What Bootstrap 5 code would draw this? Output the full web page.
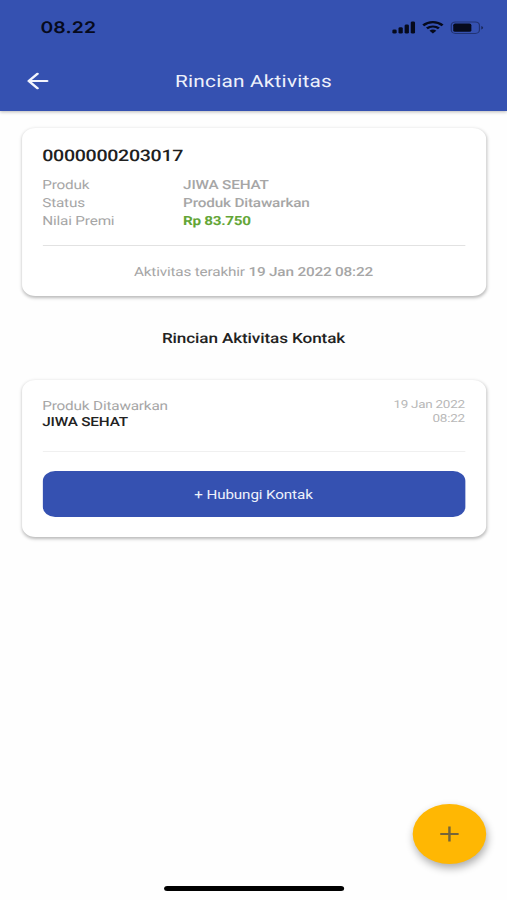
<!DOCTYPE html>
<html lang="id">
<head>
<meta charset="utf-8">
<meta name="viewport" content="width=device-width, initial-scale=1">
<title>Rincian Aktivitas</title>
<link href="https://cdn.jsdelivr.net/npm/bootstrap@5.3.0/dist/css/bootstrap.min.css" rel="stylesheet">
<style>
  html, body { height: 900px; overflow: hidden; background: #fefefe; }
  body { font-family: Roboto, "Liberation Sans", sans-serif; font-size: 12.5px; letter-spacing: -.15px; line-height: 18px; color: #a6a6a6; text-rendering: geometricPrecision; }
  /* 414px phone layout widened to fill the 507px window */
  .phone { width: 414px; height: 900px; transform: scaleX(1.22464); transform-origin: 0 0; background: #fefefe; }
  .app-head { height: 111px; background: #3551b1; box-shadow: 0 1px 3px rgba(0,0,0,.28); }
  .status-row { height: 54px; padding: 0 19px 0 33px; color: #060a1c; }
  .clock { font: 600 15.8px/20px Inter, sans-serif; letter-spacing: .15px; padding-top: 2px; }
  .title-row { height: 54px; }
  .back { left: 22px; top: 18px; line-height: 0; }
  .screen-title { font-size: 17px; line-height: 20px; letter-spacing: .17px; padding-top: 1px; color: #eef1fb; }
  .panel { margin: 0 17.5px; padding: 0 17px; border: 0; border-radius: 11px; background: #fff; color: inherit; box-shadow: 0 1.5px 3px rgba(0,0,0,.27); }
  .panel-a { margin-top: 17px; height: 168px; padding-top: 18px; }
  .panel-b { height: 157px; padding-top: 18px; }
  .ident { font-size: 16px; line-height: 20px; letter-spacing: -.25px; color: #202020; margin-bottom: 11px; }
  .key { width: 115px; }
  .medium { font-weight: 500; }
  .money { color: #64a637; font-weight: 700; letter-spacing: -.28px; }
  .rule { height: 1px; background: #e2e2e2; }
  .rule-a { margin-top: 14px; }
  .latest { margin-top: 18px; }
  .rule-soft { background: #f0f0f0; margin-top: 14px; }
  .section-title { font-size: 14px; line-height: 20px; letter-spacing: -.1px; color: #222; margin: 33px 0 31px; }
  .stamp { font-size: 11px; line-height: 14px; letter-spacing: -.22px; color: #b8b8b8; }
  .detail { height: 39px; padding-top: 1px; line-height: 16px; }
  .prod { color: #222; }
  .btn-contact { height: 46px; margin-top: 19px; border-radius: 10px; background: #3551b1; color: #eef1fb; font-size: 12.4px; letter-spacing: -.08px; line-height: 18px; padding: 1px 0 0; border: 0; }
  .btn-contact:hover { background: #2c459b; color: #fff; }
  .fab { right: 17px; bottom: 36px; width: 60px; height: 60px; background: #ffb703; box-shadow: 1px 4px 8px rgba(0,0,0,.33); }
  .home-bar { left: 134px; bottom: 9px; width: 147px; height: 5px; background: #000; }
</style>
</head>
<body>
<div class="phone position-relative">
  <header class="app-head">
    <div class="status-row d-flex align-items-center justify-content-between">
      <span class="clock">08.22</span>
      <svg width="76" height="16" viewBox="0 0 76 16" fill="currentColor" aria-label="Status">
        <rect x="1.4" y="10.4" width="3.5" height="4.2" rx="1.3"/>
        <rect x="6.4" y="8.2" width="3.5" height="6.4" rx="1.3"/>
        <rect x="11.4" y="5.4" width="3.5" height="9.2" rx="1.3"/>
        <rect x="16.4" y="2.4" width="3.5" height="12.2" rx="1.3"/>
        <g fill="none" stroke="currentColor" stroke-width="2.2">
          <path d="M26.6 6.4a11.2 11.2 0 0 1 15.8 0"/>
          <path d="M29.6 9.4a7.2 7.2 0 0 1 9.8 0"/>
        </g>
        <path d="M31.7 11.8a4.2 4.2 0 0 1 5.6 0l-2.8 2.7z"/>
        <rect x="49.5" y="2.9" width="23" height="11.6" rx="3.4" fill="none" stroke="currentColor" opacity=".42"/>
        <rect x="51.1" y="4.6" width="14.8" height="8.2" rx="1.6"/>
        <path d="M74 6.9v3.6q1.5-.5 1.5-1.8t-1.5-1.8z" opacity=".6"/>
      </svg>
    </div>
    <div class="title-row d-flex align-items-center justify-content-center position-relative">
      <a class="back position-absolute" href="#" aria-label="Kembali">
        <svg width="18" height="18" viewBox="0 0 18 18" fill="none" stroke="#f3f5fd" stroke-width="2.2" stroke-linecap="round" stroke-linejoin="round"><path d="M16.5 9H1.5M8.6 1.8 1.5 9l7.1 7.2"/></svg>
      </a>
      <h1 class="screen-title fw-normal m-0">Rincian Aktivitas</h1>
    </div>
  </header>

  <section class="card panel panel-a">
    <h2 class="ident medium">0000000203017</h2>
    <div class="d-flex"><span class="key">Produk</span><span class="medium">JIWA SEHAT</span></div>
    <div class="d-flex"><span class="key">Status</span><span class="medium">Produk Ditawarkan</span></div>
    <div class="d-flex"><span class="key">Nilai Premi</span><span class="money">Rp 83.750</span></div>
    <div class="rule rule-a"></div>
    <div class="latest text-center"><span>Aktivitas terakhir</span> <span class="medium">19 Jan 2022 08:22</span></div>
  </section>

  <h2 class="section-title medium text-center">Rincian Aktivitas Kontak</h2>

  <section class="card panel panel-b">
    <div class="d-flex justify-content-between">
      <div class="detail">
        <div>Produk Ditawarkan</div>
        <div class="prod medium">JIWA SEHAT</div>
      </div>
      <div class="stamp text-end">19 Jan 2022<br>08:22</div>
    </div>
    <div class="rule rule-soft"></div>
    <button type="button" class="btn btn-contact w-100">+ Hubungi Kontak</button>
  </section>

  <button type="button" class="fab btn border-0 p-0 rounded-circle position-absolute d-flex align-items-center justify-content-center" aria-label="Tambah">
    <svg width="16" height="16" viewBox="0 0 16 16" stroke="#75653a" stroke-width="2"><path d="M8 .5v15M.5 8h15"/></svg>
  </button>
  <div class="home-bar position-absolute rounded-pill"></div>
</div>
<script src="https://cdn.jsdelivr.net/npm/bootstrap@5.3.0/dist/js/bootstrap.bundle.min.js"></script>
</body>
</html>
